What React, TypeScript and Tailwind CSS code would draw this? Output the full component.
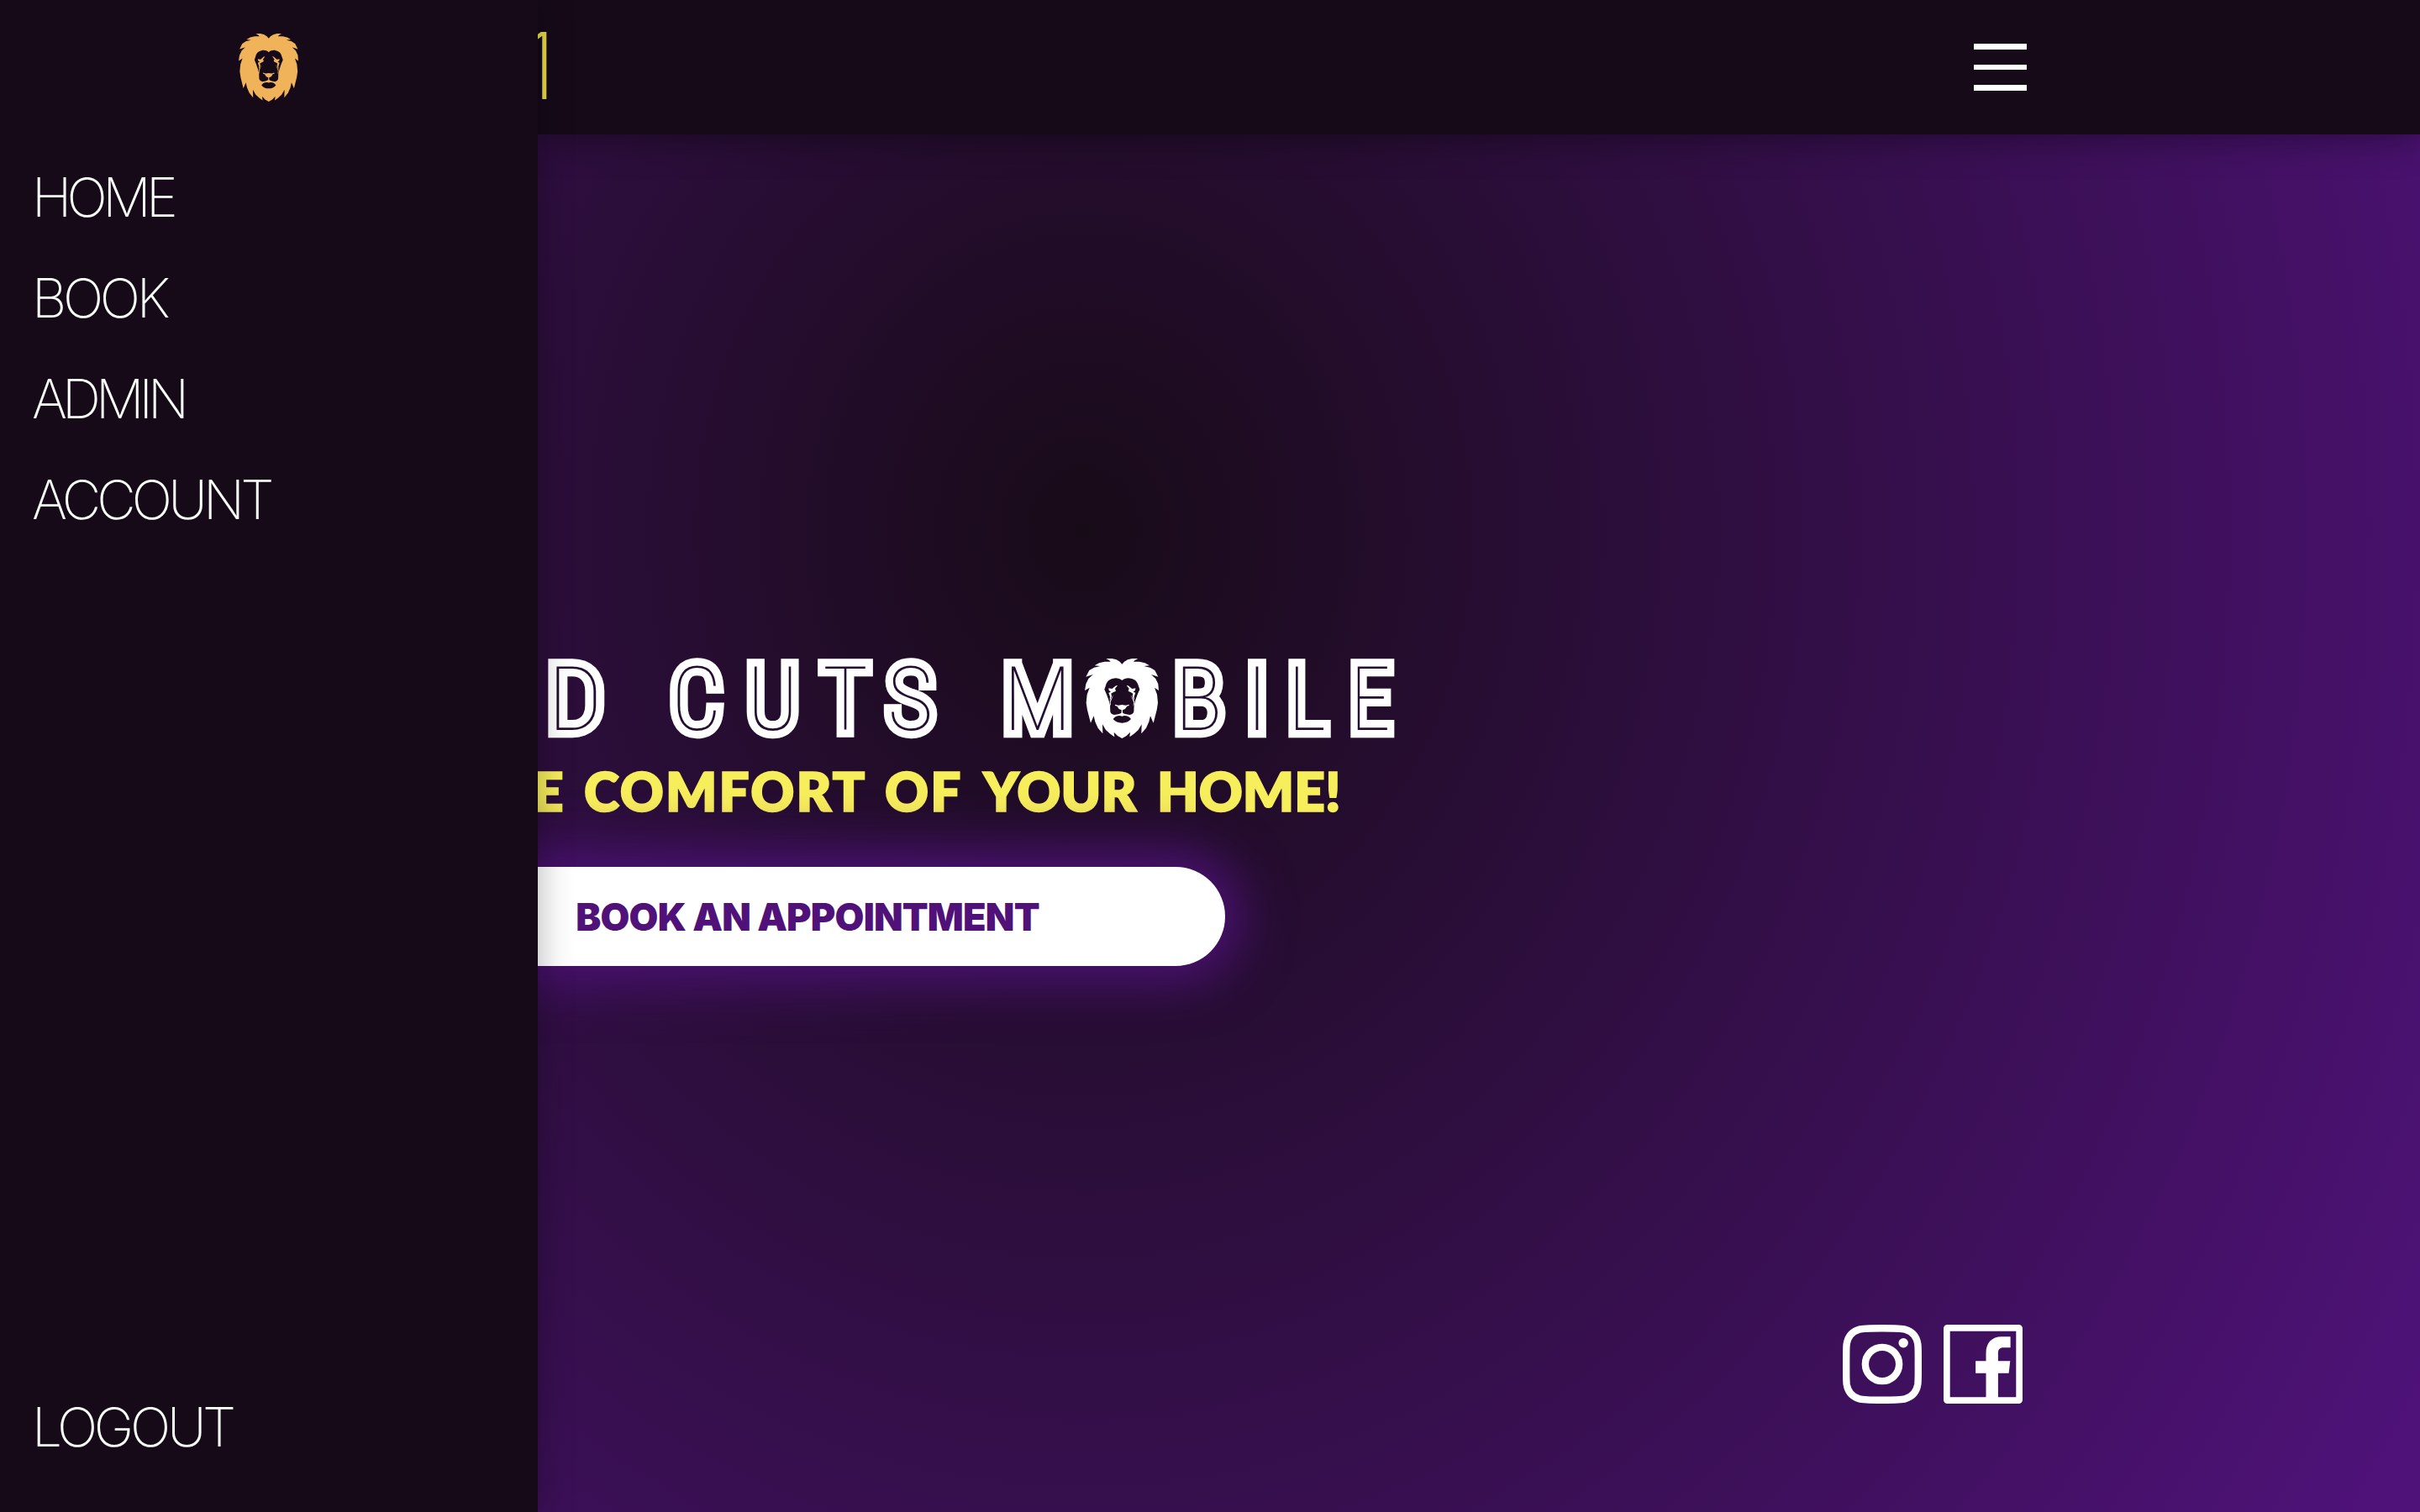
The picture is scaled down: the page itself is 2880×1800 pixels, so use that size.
const MANE =
  "M166 62L158 53L146 46L130 42L109 42L120 48L125 53L104 53L84 58L68 67L88 69L66 74L49 84L37 107L62 99L46 114L37 133L33 156L50 146L41 170L38 200L42 226L54 272L65 247L70 268L80 290L97 310L96 277L108 297L124 311L139 322L137 305L150 318L166 327" +
  "L182 318L195 305L193 322L208 311L224 297L236 277L235 310L252 290L262 268L267 247L278 272L290 226L294 200L291 170L282 146L297 156L295 133L286 114L270 99L295 107L283 84L266 74L244 69L264 67L248 58L228 53L207 53L212 48L223 42L202 42L186 46L174 53Z";
const FACE =
  "M166 120C157 111 143 110 134 113C118 116 111 126 108 138L103 152L111 170L118 190L123 208L124 232Q127 242 138 243L152 241Q161 239 164 235L164 226L155 222L148 212L141 210L141 206L153 209L166 207L179 209L191 206L191 210L184 212L177 222L168 226L168 235Q171 239 180 241L194 243Q205 242 208 232L209 208L214 190L221 170L229 152L224 138C221 126 214 116 198 113C189 110 175 111 166 120Z";
const CHIN = "M134 258Q142 246 158 246L166 248L174 246Q190 246 198 258Q186 272 166 272Q146 272 134 258Z";
const EYE = "M118 148L130 150L144 139L150 138L141 149L144 158L134 163L127 167L129 176L125 187L122 190L123 178L118 164L126 161L119 155ZM135 171L131 182L125 197L126 212L123 205L122 194Z";

function Lion({ className }: { className: string }) {
  return (
    <svg viewBox="33 42 264 285" preserveAspectRatio="none" className={className} fill="currentColor">
      <path fillRule="evenodd" d={MANE + FACE + CHIN} />
      <path d={EYE} />
      <path d={EYE} transform="translate(332 0) scale(-1 1)" />
    </svg>
  );
}

// Inline display letters: character, left position, horizontal scale.
const LETTERS: [string, number, number][] = [
  ["D", 12, 1.08],
  ["C", 159, 1],
  ["U", 249, 1],
  ["T", 339, 0.98],
  ["S", 416, 1],
  ["M", 554, 1.04],
  ["B", 758, 1.02],
  ["I", 843, 1.03],
  ["L", 893, 0.94],
  ["E", 967, 0.91],
];

function Wordmark() {
  return (
    <svg
      viewBox="0 0 1040 110"
      className="block h-[110px] w-[1040px] shrink-0 overflow-visible font-['Roboto'] text-[105px] font-thin [font-stretch:75%]"
    >
      {LETTERS.map(([char, x, scale]) => (
        <g key={x} transform={`translate(${x} 93) scale(${scale} 1)`}>
          <text fill="#fff" stroke="#fff" strokeWidth="18.5" strokeMiterlimit="1.5">
            {char}
          </text>
          <text fill="#230d31" aria-hidden="true">
            {char}
          </text>
        </g>
      ))}
    </svg>
  );
}

function Instagram() {
  return (
    <svg viewBox="100 82 280 280" className="size-[94px]" fill="none" stroke="#fff" strokeWidth="25">
      <path d="M240 94.500C190 94.500 172 94.500 158 99C132 107 118 125 114 150C112 165 112.500 185 112.500 222C112.500 259 112 279 114 294C118 319 132 337 158 345C172 349.500 190 349.500 240 349.500C290 349.500 308 349.500 322 345C348 337 362 319 366 294C368 279 367.500 259 367.500 222C367.500 185 368 165 366 150C362 125 348 107 322 99C308 94.500 290 94.500 240 94.500Z" />
      <circle cx="240" cy="222" r="60" />
      <circle cx="315" cy="147" r="17" fill="#fff" stroke="none" />
    </svg>
  );
}

function Facebook() {
  return (
    <svg viewBox="459 82 281 280" className="size-[94px]" fill="#fff">
      <rect x="470.500" y="93" width="258" height="258" rx="2" fill="none" stroke="#fff" strokeWidth="23" strokeLinejoin="round" />
      <path d="M610 345V254H573V211H610V182C610 145 632 124 665 124H697V163H672C659 163 653 170 653 182V211H696L691 254H653V345Z" />
    </svg>
  );
}

const MENU = [
  { label: "HOME", tracking: "tracking-[-0.087em]" },
  { label: "BOOK", tracking: "tracking-[-0.067em]" },
  { label: "ADMIN", tracking: "tracking-[-0.092em]" },
  { label: "ACCOUNT", tracking: "tracking-[-0.075em]" },
];
const ITEM = "flex h-[120px] items-center pl-[38px] text-[64px] leading-none [font-weight:190] ";

export default function App() {
  return (
    <div className="flex h-[1800px] w-[2880px] overflow-hidden bg-[#170a19] font-['Inter',sans-serif] text-white">
      <aside className="relative z-20 flex w-[640px] shrink-0 flex-col bg-[#160a19] shadow-[0_0_40px_rgba(0,0,0,0.3)]">
        <div className="flex h-40 items-center justify-center pr-[1px]">
          <Lion className="h-[81px] w-[71px] text-[#f0b359]" />
        </div>
        <nav className="flex flex-1 flex-col pt-[15px] pb-[41px]">
          {MENU.map((m) => (
            <a key={m.label} className={ITEM + m.tracking}>
              {m.label}
            </a>
          ))}
          <a className={ITEM + "mt-auto tracking-[-0.067em]"}>LOGOUT</a>
        </nav>
      </aside>

      <div className="flex min-w-0 flex-1 flex-col">
        <header className="relative z-10 flex h-40 shrink-0 items-center justify-between bg-[#160a19] pr-[468px] shadow-[0_4px_40px_rgba(0,0,0,0.4)]">
          <span className="-mt-1 -ml-[20px] text-[110px] leading-none [font-weight:150] text-[#e8dc45]">1</span>
          <div className="flex flex-col gap-[18px]">
            <span className="h-[6.5px] w-[63px] bg-white" />
            <span className="h-[6.5px] w-[63px] bg-white" />
            <span className="h-[6.5px] w-[63px] bg-white" />
          </div>
        </header>

        <main className="flex min-h-0 flex-1 flex-col bg-[radial-gradient(1830px_2100px_at_650px_472px,#180b18,#4e1278)] pt-[616px]">
          <div className="relative">
            <Wordmark />
            <Lion className="absolute top-[8px] left-[651px] h-[95px] w-[88px] text-white" />
          </div>
          <p className="mt-[18px] -ml-[6px] flex h-[75px] font-['Lato',sans-serif] text-[64px] leading-[75px] font-extrabold whitespace-pre text-[#f7ee5b] [-webkit-text-stroke:1.5px_#f7ee5b]">
            <span className="w-[61px]">E </span>
            <span className="w-[358px] tracking-[2px]">COMFORT </span>
            <span className="w-[117px] tracking-[2px]">OF </span>
            <span className="w-[207px] tracking-[0.2px]">YOUR </span>
            <span>HOME!</span>
          </p>
          <button className="mt-[53px] -ml-[176px] h-[118px] w-[994px] rounded-full bg-white pt-[2px] text-[45px] font-black tracking-[-0.8px] text-[#501279] shadow-[0_0_60px_20px_#4c1274]">
            BOOK AN APPOINTMENT
          </button>
          <div className="mt-auto mb-[129px] flex justify-end gap-[26px] pr-[473px]">
            <Instagram />
            <Facebook />
          </div>
        </main>
      </div>
    </div>
  );
}
